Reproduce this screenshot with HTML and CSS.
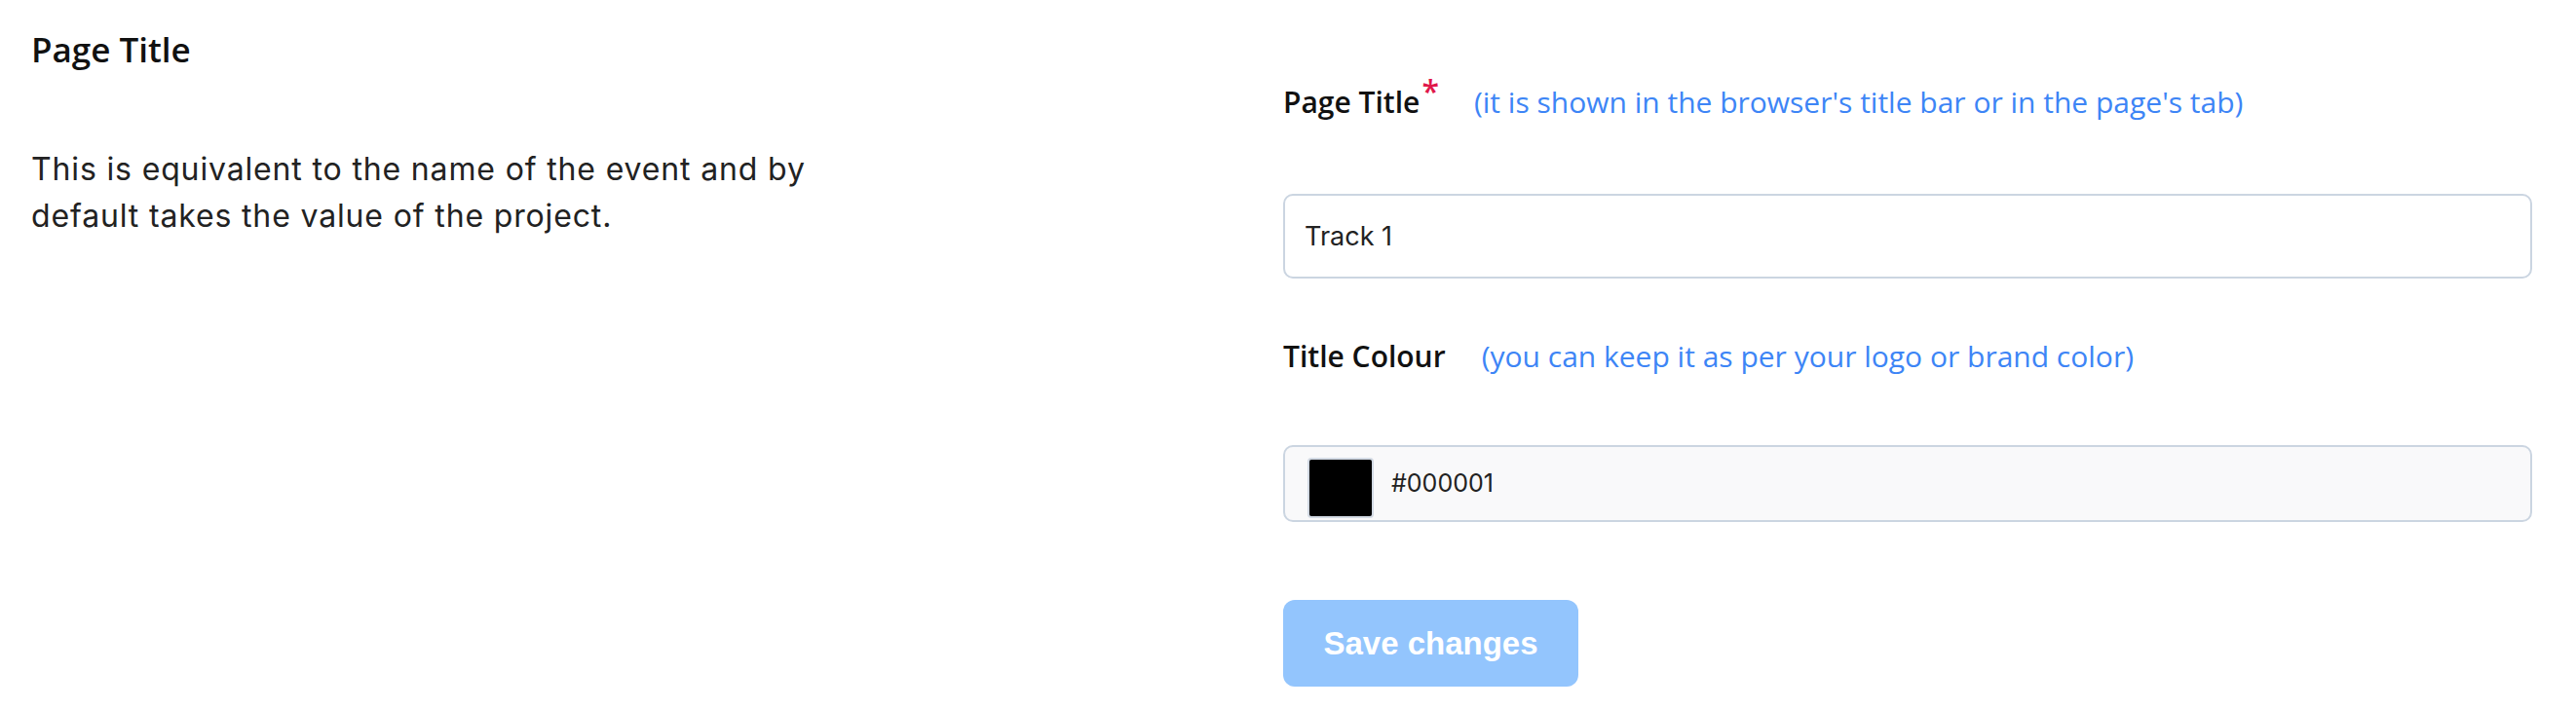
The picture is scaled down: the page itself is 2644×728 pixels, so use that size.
FILE: index.html
```html
<!DOCTYPE html>
<html lang="en">
<head>
<meta charset="utf-8">
<title>Page Title</title>
<link rel="stylesheet" href="styles.css">
</head>
<body>
<main class="settings">
  <section class="intro">
    <h2 class="intro-title">Page Title</h2>
    <p class="intro-text">This is equivalent to the name of the event and by default takes the value of the project.</p>
  </section>
  <form class="form">
    <div class="label-row label-row-first">
      <label class="label" for="page-title">Page Title<span class="req">*</span></label>
      <span class="hint">(it is shown in the browser's title bar or in the page's tab)</span>
    </div>
    <input class="text-input" id="page-title" type="text" value="Track 1">
    <div class="label-row label-row-second">
      <span class="label">Title Colour</span>
      <span class="hint hint-second">(you can keep it as per your logo or brand color)</span>
    </div>
    <div class="color-input">
      <span class="swatch"></span>
      <span class="color-value">#000001</span>
    </div>
    <button class="save" type="button">Save changes</button>
  </form>
</main>
</body>
</html>
```
FILE: styles.css
```css
html, body {
  margin: 0;
  padding: 0;
  background: #ffffff;
}

.settings {
  display: grid;
  grid-template-columns: 1fr 1282px;
  padding: 0 45px 0 32px;
  box-sizing: border-box;
  width: 2644px;
  height: 728px;
}

.intro {
  padding-top: 27px;
}

.intro-title {
  margin: 0;
  font-family: "Open Sans", sans-serif;
  font-weight: 600;
  font-size: 35px;
  line-height: 48px;
  color: #111111;
}

.intro-text {
  margin: 75px 0 0 0;
  max-width: 880px;
  font-family: Inter, Roboto, sans-serif;
  font-size: 32px;
  letter-spacing: 0.85px;
  line-height: 48px;
  color: #222222;
}

.form {
  display: flex;
  flex-direction: column;
  align-items: flex-start;
  padding-top: 80px;
}

.label-row {
  display: flex;
  align-items: baseline;
  height: 48px;
  line-height: 48px;
}

.label-row-second {
  margin-top: 56px;
}

.label {
  font-family: "Open Sans", sans-serif;
  font-weight: 600;
  font-size: 30px;
  color: #111111;
}

.req {
  color: #e0184a;
  font-size: 32px;
  position: relative;
  top: -10px;
  margin-left: 2px;
}

.hint {
  margin-left: 36px;
  font-family: "Open Sans", sans-serif;
  font-size: 30px;
  color: #3d85f6;
}

.hint-second {
  margin-left: 37px;
}

.text-input {
  margin-top: 71px;
  width: 1282px;
  height: 87px;
  box-sizing: border-box;
  border: 2px solid #cbd5e1;
  border-radius: 10px;
  background: #ffffff;
  padding: 0 20px;
  font-family: Inter, Roboto, sans-serif;
  font-size: 27px;
  color: #222222;
  outline: none;
}

.color-input {
  margin-top: 67px;
  width: 1282px;
  height: 79px;
  box-sizing: border-box;
  border: 2px solid #cbd5e1;
  border-radius: 10px;
  background: #f9f9fa;
  display: flex;
  align-items: flex-end;
  padding: 0 0 2px 23px;
}

.swatch {
  width: 68px;
  height: 62px;
  box-sizing: border-box;
  background: #000000;
  border: 2px solid #d3dae4;
  border-radius: 4px;
}

.color-value {
  align-self: center;
  margin-left: 18px;
  font-family: Inter, Roboto, sans-serif;
  font-size: 25px;
  color: #222222;
}

.save {
  margin-top: 80px;
  width: 303px;
  height: 89px;
  border: none;
  border-radius: 12px;
  background: #93c5fd;
  color: #ffffff;
  font-family: "Liberation Sans", Arial, sans-serif;
  font-weight: 700;
  font-size: 33px;
  padding: 0;
}
```
